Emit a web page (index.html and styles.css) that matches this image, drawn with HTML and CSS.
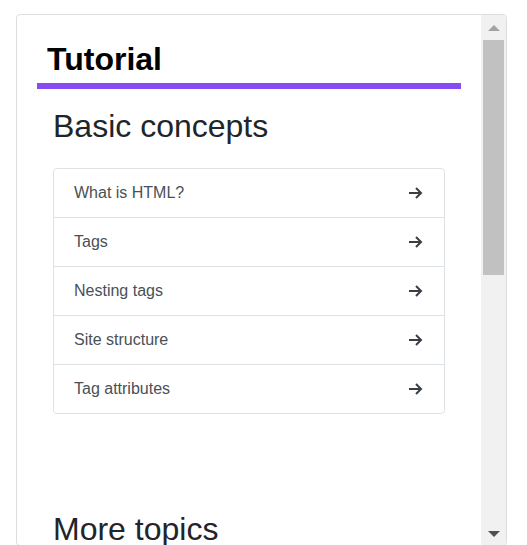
FILE: index.html
```html
<!DOCTYPE html>
<html lang="en">
<head>
<meta charset="utf-8">
<title>Tutorial</title>
<link rel="stylesheet" href="styles.css">
</head>
<body>
<div class="page">
  <div class="panel">
    <div class="content">
      <h1 class="title">Tutorial</h1>

      <section class="topic">
        <h3 class="topic-title">Basic concepts</h3>
        <div class="list">
          <a class="list-item" href="#">What is HTML?<svg class="arrow" viewBox="0 0 14 12"><path d="M0 6h12.5M7 1l5 5-5 5"/></svg></a>
          <a class="list-item" href="#">Tags<svg class="arrow" viewBox="0 0 14 12"><path d="M0 6h12.5M7 1l5 5-5 5"/></svg></a>
          <a class="list-item" href="#">Nesting tags<svg class="arrow" viewBox="0 0 14 12"><path d="M0 6h12.5M7 1l5 5-5 5"/></svg></a>
          <a class="list-item" href="#">Site structure<svg class="arrow" viewBox="0 0 14 12"><path d="M0 6h12.5M7 1l5 5-5 5"/></svg></a>
          <a class="list-item" href="#">Tag attributes<svg class="arrow" viewBox="0 0 14 12"><path d="M0 6h12.5M7 1l5 5-5 5"/></svg></a>
        </div>
      </section>

      <section class="topic topic-next">
        <h3 class="topic-title">More topics</h3>
      </section>
    </div>

    <div class="scrollbar" aria-hidden="true">
      <div class="sb-btn"><span class="tri tri-up"></span></div>
      <div class="sb-track"><div class="sb-thumb"></div></div>
      <div class="sb-btn"><span class="tri tri-down"></span></div>
    </div>
  </div>
</div>
</body>
</html>
```
FILE: styles.css
```css
html, body {
  margin: 0;
  padding: 0;
  background: #fff;
}

body {
  font-family: "Liberation Sans", Arial, sans-serif;
  color: #212529;
}

.page {
  padding: 14px 0 0 16px;
}

.panel {
  box-sizing: border-box;
  width: 491px;
  height: 532px;
  border: 1px solid #dddddd;
  border-radius: 4px;
  display: flex;
  overflow: hidden;
  background: #fff;
}

.content {
  flex: 1;
  min-width: 0;
  overflow: hidden;
  padding: 0 20px;
}

/* scrollbar */
.scrollbar {
  width: 25px;
  flex: none;
  display: flex;
  flex-direction: column;
  background: #f1f1f1;
}

.sb-btn {
  height: 25px;
  flex: none;
  display: flex;
  align-items: center;
  justify-content: center;
}

.sb-btn:last-child {
  padding-top: 2px;
  box-sizing: border-box;
}

.sb-track {
  flex: 1;
  padding: 0 2px;
}

.sb-thumb {
  height: 235px;
  background: #c1c1c1;
}

.tri {
  width: 0;
  height: 0;
  border-left: 6px solid transparent;
  border-right: 6px solid transparent;
}

.tri-up {
  border-bottom: 6px solid #a3a3a3;
}

.tri-down {
  border-top: 6px solid #505050;
}

/* content */
.title {
  margin: 26px 0 0;
  padding: 0 10px 5px;
  font-size: 32px;
  line-height: 37px;
  font-weight: bold;
  color: #000;
  border-bottom: 6px solid #874bf4;
}

.topic {
  display: flex;
  flex-direction: column;
  padding: 19px 16px 0;
}

.topic-next {
  margin-top: 78px;
}

.topic-title {
  margin: 0 0 24px;
  font-size: 32px;
  line-height: 36px;
  font-weight: normal;
  color: #212529;
}

.list {
  display: flex;
  flex-direction: column;
  border: 1px solid #dee2e6;
  border-radius: 4px;
}

.list-item {
  display: flex;
  align-items: center;
  justify-content: space-between;
  padding: 12px 20px;
  font-size: 16px;
  line-height: 24px;
  color: #495057;
  text-decoration: none;
  border-bottom: 1px solid #dee2e6;
}

.list-item:last-child {
  border-bottom: 0;
}

.arrow {
  width: 14px;
  height: 12px;
  margin-right: 1px;
  fill: none;
  stroke: #3a3f45;
  stroke-width: 2;
}
```
